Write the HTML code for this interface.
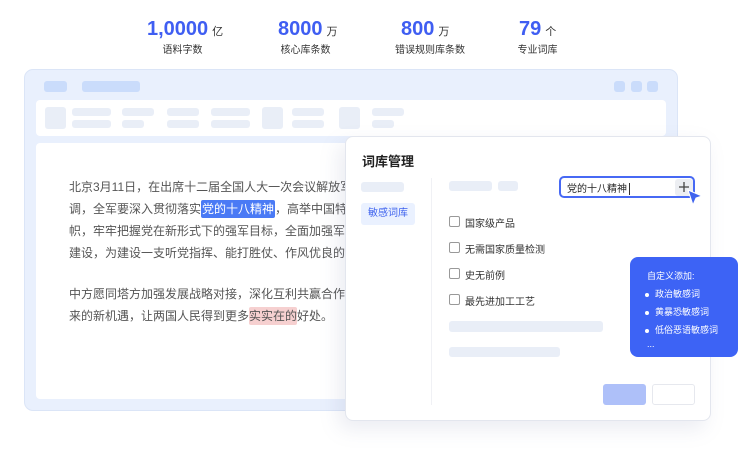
<!DOCTYPE html>
<html><head><meta charset="utf-8"><style>
*{margin:0;padding:0;box-sizing:border-box}
body{width:747px;height:451px;background:#fff;position:relative;overflow:hidden;font-family:"Liberation Sans","Noto Sans CJK SC",sans-serif;color:#333}
.a{position:absolute}
.num{color:#3f5ef2;font-weight:bold;font-size:20px;white-space:nowrap}
.num span{font-size:11px;color:#333;font-weight:normal;margin-left:4px}
.lab{font-size:10px;color:#333;white-space:nowrap;text-align:center}
.g{background:#e9eef7;border-radius:3px;position:absolute}
.b{background:#cadcfb;border-radius:3px;position:absolute}
.txt{font-size:12px;color:#555;line-height:22px;white-space:nowrap}
.cb{position:absolute;width:11px;height:11px;border:1px solid #999;border-radius:2px;background:#fff}
.ci{position:absolute;font-size:10px;color:#333;white-space:nowrap}
.dot{display:inline-block;width:4px;height:4px;border-radius:2px;background:#fff;margin-right:6px;vertical-align:middle}
</style></head><body>
<div class="a num" style="left:147px;top:18px">1,0000<span>亿</span></div>
<div class="a lab" style="left:155px;top:41px;width:55px">语料字数</div>
<div class="a num" style="left:278px;top:18px">8000<span>万</span></div>
<div class="a lab" style="left:278px;top:41px;width:55px">核心库条数</div>
<div class="a num" style="left:401px;top:18px">800<span>万</span></div>
<div class="a lab" style="left:390px;top:41px;width:80px">错误规则库条数</div>
<div class="a num" style="left:519px;top:18px">79<span>个</span></div>
<div class="a lab" style="left:510px;top:41px;width:55px">专业词库</div>

<div class="a" style="left:24px;top:69px;width:654px;height:342px;background:#e9f0fd;border:1px solid #dbe5f7;border-radius:9px"></div>
<div class="b" style="left:44px;top:81px;width:23px;height:11px"></div>
<div class="b" style="left:82px;top:81px;width:58px;height:11px"></div>
<div class="b" style="left:614px;top:81px;width:11px;height:11px"></div>
<div class="b" style="left:631px;top:81px;width:11px;height:11px"></div>
<div class="b" style="left:647px;top:81px;width:11px;height:11px"></div>
<div class="a" style="left:36px;top:100px;width:630px;height:36px;background:#fff;border-radius:4px"></div>
<div class="g" style="left:45px;top:107px;width:21px;height:22px"></div>
<div class="g" style="left:72px;top:108px;width:39px;height:8px"></div>
<div class="g" style="left:72px;top:120px;width:39px;height:8px"></div>
<div class="g" style="left:122px;top:108px;width:32px;height:8px"></div>
<div class="g" style="left:122px;top:120px;width:22px;height:8px"></div>
<div class="g" style="left:167px;top:108px;width:32px;height:8px"></div>
<div class="g" style="left:167px;top:120px;width:32px;height:8px"></div>
<div class="g" style="left:211px;top:108px;width:39px;height:8px"></div>
<div class="g" style="left:211px;top:120px;width:39px;height:8px"></div>
<div class="g" style="left:262px;top:107px;width:21px;height:22px"></div>
<div class="g" style="left:292px;top:108px;width:32px;height:8px"></div>
<div class="g" style="left:292px;top:120px;width:32px;height:8px"></div>
<div class="g" style="left:339px;top:107px;width:21px;height:22px"></div>
<div class="g" style="left:372px;top:108px;width:32px;height:8px"></div>
<div class="g" style="left:372px;top:120px;width:22px;height:8px"></div>
<div class="a" style="left:36px;top:143px;width:630px;height:256px;background:#fff;border-radius:4px"></div>

<div class="a txt" style="left:69px;top:176px">北京3月11日，在出席十二届全国人大一次会议解放军<br>调，全军要深入贯彻落实<span style="background:#4a7af5;color:#fff;border-radius:2px;padding:2px 1px">党的十八精神</span>，高举中国特色<br>帜，牢牢把握党在新形式下的强军目标，全面加强军队<br>建设，为建设一支听党指挥、能打胜仗、作风优良的人</div>
<div class="a txt" style="left:69px;top:283px">中方愿同塔方加强发展战略对接，深化互利共赢合作，<br>来的新机遇，让两国人民得到更多<span style="background:#f6d0d0;border-radius:2px;padding:2px 0">实实在的</span>好处。</div>

<div class="a" style="left:345px;top:136px;width:366px;height:285px;background:#fff;border:1px solid #e3e6ee;border-radius:8px;box-shadow:-6px 8px 20px rgba(120,130,170,0.15)"></div>
<div class="a" style="left:362px;top:151px;font-size:13px;font-weight:bold;color:#222">词库管理</div>
<div class="g" style="left:361px;top:182px;width:43px;height:10px"></div>
<div class="a" style="left:361px;top:203px;width:54px;height:22px;background:#eaf1ff;border-radius:3px;font-size:10px;color:#3f63ee;line-height:22px;text-align:center">敏感词库</div>
<div class="a" style="left:431px;top:178px;width:1px;height:227px;background:#f0f1f5"></div>
<div class="g" style="left:449px;top:181px;width:43px;height:10px"></div>
<div class="g" style="left:498px;top:181px;width:20px;height:10px"></div>
<div class="a" style="left:559px;top:176px;width:136px;height:22px;border:2px solid #4769f4;border-radius:5px;background:#fff"></div>
<div class="a" style="left:567px;top:180px;font-size:10px;color:#222;white-space:nowrap">党的十八精神<span style="display:inline-block;width:1px;height:12px;background:#333;vertical-align:middle;margin-left:2px"></span></div>
<div class="a" style="left:675px;top:179px;width:18px;height:17px;background:#eceef2;border-radius:3px"></div>
<svg class="a" style="left:678px;top:181px" width="12" height="12"><path d="M6 1V11M1 6H11" stroke="#444" stroke-width="1.3"/></svg>
<svg class="a" style="left:686px;top:189px" width="18" height="18"><path d="M2 1 L16 7 L10 9 L7 16 Z" fill="#3f63ee" stroke="#fff" stroke-width="1"/></svg>

<div class="cb" style="left:449px;top:216px"></div><div class="ci" style="left:465px;top:215px">国家级产品</div>
<div class="cb" style="left:449px;top:242px"></div><div class="ci" style="left:465px;top:241px">无需国家质量检测</div>
<div class="cb" style="left:449px;top:268px"></div><div class="ci" style="left:465px;top:267px">史无前例</div>
<div class="cb" style="left:449px;top:294px"></div><div class="ci" style="left:465px;top:293px">最先进加工工艺</div>
<div class="g" style="left:449px;top:321px;width:154px;height:11px"></div>
<div class="g" style="left:449px;top:347px;width:111px;height:10px"></div>
<div class="a" style="left:603px;top:384px;width:43px;height:21px;background:#aec0f9;border-radius:3px"></div>
<div class="a" style="left:652px;top:384px;width:43px;height:21px;border:1px solid #e6e8ee;border-radius:3px"></div>

<div class="a" style="left:630px;top:257px;width:108px;height:100px;background:#3d63f5;border-radius:8px;color:#fff;font-size:9px;padding:10px 0 0 17px;line-height:18px">
<div>自定义添加:</div>
<div style="margin-left:-2px"><span class="dot"></span>政治敏感词</div>
<div style="margin-left:-2px"><span class="dot"></span>黄暴恐敏感词</div>
<div style="margin-left:-2px"><span class="dot"></span>低俗恶语敏感词</div>
<div style="line-height:10px">...</div>
</div>
</body></html>
